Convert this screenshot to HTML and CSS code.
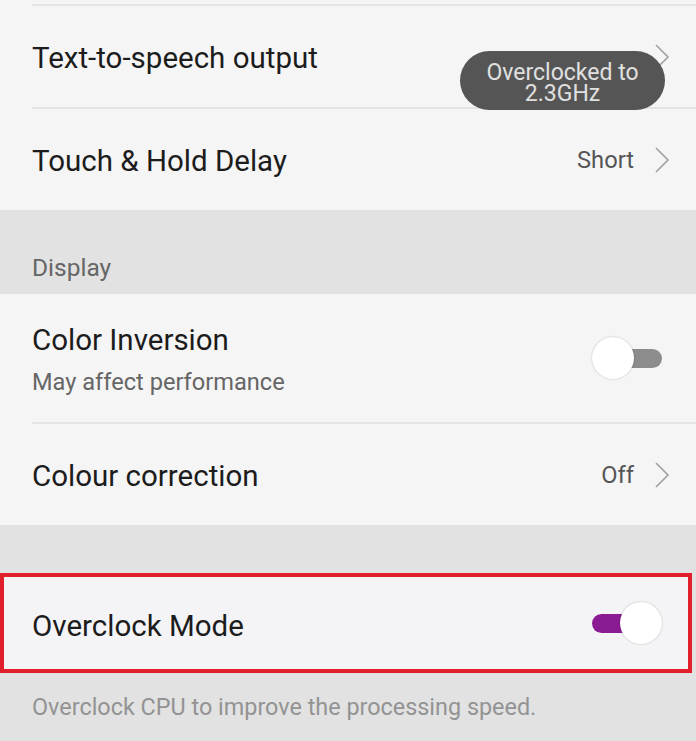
FILE: index.html
```html
<!DOCTYPE html>
<html>
<head>
<meta charset="utf-8">
<link rel="stylesheet" href="styles.css">
</head>
<body>
<div class="screen">
  <div class="group">
    <div class="top-spacer"></div>
    <div class="divider"></div>
    <div class="row">
      <span class="title">Text-to-speech output</span>
      <span class="right"><svg class="chev" viewBox="0 0 16 28" width="16" height="28"><polyline points="2,2 14,14 2,26" fill="none" stroke="#a0a0a0" stroke-width="1.6"/></svg></span>
    </div>
    <div class="divider"></div>
    <div class="row">
      <span class="title">Touch &amp; Hold Delay</span>
      <span class="right"><span class="value">Short</span><svg class="chev" viewBox="0 0 16 28" width="16" height="28"><polyline points="2,2 14,14 2,26" fill="none" stroke="#a0a0a0" stroke-width="1.6"/></svg></span>
    </div>
  </div>
  <div class="section-header">Display</div>
  <div class="group">
    <div class="row tall">
      <div class="texts">
        <span class="title">Color Inversion</span>
        <span class="subtitle">May affect performance</span>
      </div>
      <span class="switch off"><span class="track"></span><span class="thumb"></span></span>
    </div>
    <div class="divider"></div>
    <div class="row">
      <span class="title">Colour correction</span>
      <span class="right"><span class="value">Off</span><svg class="chev" viewBox="0 0 16 28" width="16" height="28"><polyline points="2,2 14,14 2,26" fill="none" stroke="#a0a0a0" stroke-width="1.6"/></svg></span>
    </div>
  </div>
  <div class="gap"></div>
  <div class="highlight">
    <div class="row boxed">
      <span class="title">Overclock Mode</span>
      <span class="switch on"><span class="track"></span><span class="thumb"></span></span>
    </div>
  </div>
  <div class="description">Overclock CPU to improve the processing speed.</div>
  <div class="tooltip">Overclocked to<br>2.3GHz</div>
</div>
</body>
</html>
```

FILE: styles.css
```css
html, body {
  margin: 0;
  padding: 0;
}
body {
  background: #e2e2e2;
  font-family: Roboto, "Noto Sans", "Liberation Sans", sans-serif;
  width: 696px;
  height: 741px;
  overflow: hidden;
}
.screen {
  position: relative;
  width: 696px;
  height: 741px;
}
.group {
  background: #f5f5f5;
}
.top-spacer {
  height: 4px;
}
.divider {
  height: 2px;
  margin-left: 32px;
  background: #e4e4e4;
}
.row {
  height: 101px;
  display: flex;
  align-items: center;
  justify-content: space-between;
  padding: 0 26px 0 32px;
  box-sizing: border-box;
}
.row.tall {
  height: 128px;
  padding-right: 34px;
}
.title {
  font-size: 29.5px;
  color: #1c1c1c;
  line-height: 34px;
  padding-top: 2px;
}
.texts {
  display: flex;
  flex-direction: column;
}
.texts .title {
  margin-top: 0;
}
.subtitle {
  font-size: 23.6px;
  color: #666;
  line-height: 28px;
  margin-top: 11px;
}
.right {
  display: flex;
  align-items: center;
  gap: 20px;
}
.value {
  font-size: 23.7px;
  color: #555;
}
.chev {
  display: block;
}
.section-header {
  height: 84px;
  box-sizing: border-box;
  padding: 44px 32px 0;
  font-size: 24.5px;
  line-height: 28px;
  color: #666;
}
.gap {
  height: 48px;
}
.highlight {
  width: 692px;
  height: 100px;
  box-sizing: border-box;
  border: 4px solid #e01f2b;
  background: #f4f4f6;
}
.row.boxed {
  height: 92px;
  padding: 0 26px 0 28px;
}
.row.boxed .title {
  padding-top: 6px;
}
.switch {
  position: relative;
  width: 70px;
  height: 42px;
  display: block;
}
.switch .track {
  position: absolute;
  top: 12px;
  height: 19px;
  border-radius: 10px;
}
.switch .thumb {
  position: absolute;
  top: 0;
  width: 42px;
  height: 42px;
  border-radius: 50%;
  background: #fff;
  box-shadow: 0 0 2px rgba(0,0,0,0.25);
}
.switch.off .track {
  left: 20px;
  right: 0;
  background: #8c8c8c;
}
.switch.off .thumb {
  left: 0;
}
.switch.on .track {
  left: 0;
  right: 22px;
  background: #8b1b93;
}
.switch.on .thumb {
  right: 0;
}
.description {
  padding: 20px 32px 0;
  font-size: 23.4px;
  line-height: 28px;
  color: #939393;
}
.tooltip {
  position: absolute;
  left: 460px;
  top: 51px;
  width: 205px;
  height: 59px;
  box-sizing: border-box;
  border-radius: 30px;
  background: #555555;
  color: #e0e0e0;
  font-size: 23px;
  line-height: 21px;
  text-align: center;
  padding-top: 11px;
}
```
